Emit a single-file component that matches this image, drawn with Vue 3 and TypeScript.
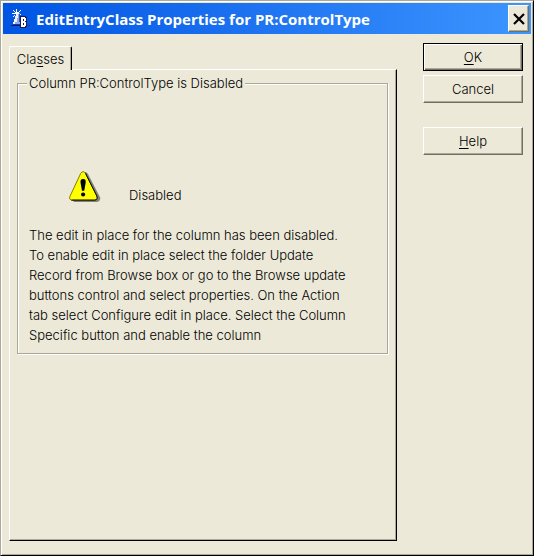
<script setup lang="ts">
interface KeyedLabel {
  before: string
  key: string
  after: string
}

const title = 'EditEntryClass Properties for PR:ControlType'
const tab: KeyedLabel = { before: 'Cla', key: 's', after: 'ses' }
const actions: (KeyedLabel & { kind: string })[] = [
  { kind: 'default', before: '', key: 'O', after: 'K' },
  { kind: 'plain', before: 'Cancel', key: '', after: '' },
  { kind: 'spaced', before: '', key: 'H', after: 'elp' },
]
const message: string[] = [
  'The edit in place for the column has been disabled.',
  'To enable edit in place select the folder Update',
  'Record from Browse box or go to the Browse update',
  'buttons control and select properties. On the Action',
  'tab select Configure edit in place. Select the Column',
  'Specific button and enable the column',
]
</script>

<template>
  <main class="dialog" role="dialog" aria-labelledby="dialog-title">
    <header class="titlebar">
      <svg class="app-icon" viewBox="0 0 20 20" aria-hidden="true" shape-rendering="crispEdges">
        <path d="M5 4h4v4h1v4h1v4H2v-3h1v-3h1V7h1z" fill="#8fa8ea" />
        <path d="M5 4h2v5H6v4H4v2H2v-2h1v-3h1V7h1z" fill="#eef4ff" />
        <path d="M8 5h1v3h1v4h1v4H9v-3H8z" fill="#3046b0" />
        <path d="M0 16h11v1H0z" fill="#0c1c70" />
        <path d="M2 15h8v1H2zM15 16h4v1h-4z" fill="#26369a" />
        <path d="M5 0h1v3H5zM2 1h1v1H2zM3 2h1v1H3zM1 4h3v1H1zM4 3h4v2H4zM8 2h1v1H8zM9 1h1v1H9zM9 5h1v1H9zM3 6h1v1H3zM2 7h1v1H2z" fill="#fff" />
        <path d="M9 7h6v1h1v10h-1v1H9z" fill="#14205e" />
        <path fill-rule="evenodd" d="M10 8h4v1h1v3h-1v1h1v4h-1v1h-4zM12 10v2h1v-2zM12 14v2h1v-2z" fill="#fff" />
      </svg>
      <h1 id="dialog-title" class="title">{{ title }}</h1>
      <button class="close" type="button" aria-label="Close">
        <svg viewBox="0 0 12 12" aria-hidden="true">
          <path d="M1 1L11 11M11 1L1 11" stroke="#000" stroke-width="2.2" />
        </svg>
      </button>
    </header>

    <div class="body">
      <section class="sheet">
        <div role="tablist" class="tabs">
          <button id="tab-classes" class="tab" type="button" role="tab" aria-selected="true" aria-controls="panel-classes">{{ tab.before }}<u>{{ tab.key }}</u>{{ tab.after }}</button>
        </div>
        <div id="panel-classes" class="panel" role="tabpanel" aria-labelledby="tab-classes">
          <fieldset class="group">
            <legend>Column PR:ControlType is Disabled</legend>
            <div class="status">
              <svg class="warning" viewBox="0 0 34 34" aria-hidden="true">
                <path d="M16 3q2-2 4 1l13 25q1 4-3 5H7q-3 0-3-3z" fill="#808080" />
                <path d="M12.500 3.500q2.500-3.500 5 0l12 24q1.500 4-2 4.500h-25q-3-1-1.500-4z" fill="#ff0" stroke="#777700" />
                <path d="M17.500 3.500l12 24q1.500 4-2 4.500h-25" fill="none" stroke="#000" />
                <path d="M15 9.500c2.500 0 3 1.500 2.700 4L16.200 22h-2.400l-1.500-8.500c-.3-2.500.2-4 2.700-4z" fill="#000" />
                <circle cx="15" cy="26" r="2.200" fill="#000" />
              </svg>
              <span>Disabled</span>
            </div>
            <p class="message">
              <span v-for="line in message" :key="line" class="line">{{ line }}</span>
            </p>
          </fieldset>
        </div>
      </section>

      <nav class="actions" aria-label="Dialog actions">
        <button v-for="(a, i) in actions" :key="i" type="button" class="action" :class="a.kind">{{ a.before }}<u v-if="a.key">{{ a.key }}</u>{{ a.after }}</button>
      </nav>
    </div>
  </main>
</template>

<style>
body {
  background: #ece9d8;
}
</style>

<style scoped>
.dialog {
  box-sizing: border-box;
  min-height: 100vh;
  display: flex;
  flex-direction: column;
  padding: 1px;
  border: 1px solid;
  border-color: #aca899 #000 #000 #aca899;
  background: #ece9d8;
  box-shadow: inset 1px 1px #fff, inset -1px -1px #aca899;
  color: #000;
  font: 300 13px/20px Inter, Arial, sans-serif;
}

button {
  margin: 0;
  padding: 0;
  border-radius: 0;
  background: #ece9d8;
  color: inherit;
  font: inherit;
}

u {
  text-underline-offset: 2px;
  text-decoration-thickness: 1px;
}

.titlebar {
  display: flex;
  align-items: center;
  height: 31px;
  margin: 1px;
  padding: 0 2px 0 8px;
  background: linear-gradient(90deg, #0054e3, #3d95ff);
}

.app-icon {
  width: 20px;
  height: 20px;
  flex: none;
}

.title {
  flex: 1;
  margin: 0 0 0 5px;
  color: #fff;
  font: bold 15px/20px "Open Sans", "Trebuchet MS", sans-serif;
  white-space: nowrap;
}

.close {
  display: grid;
  place-items: center;
  width: 21px;
  height: 27px;
  border: 1px solid;
  border-color: #fff #716f64 #716f64 #fff;
  box-shadow: inset -1px -1px #aca899;
}

.close svg {
  width: 12px;
  height: 12px;
}

.body {
  flex: 1;
  display: flex;
  gap: 26px;
  padding: 8px 9px 13px 7px;
}

.sheet {
  flex: 1;
  display: flex;
  flex-direction: column;
  padding-top: 3px;
}

.tabs {
  display: flex;
}

.tab {
  position: relative;
  width: 63px;
  height: 24px;
  margin-bottom: -1px;
  border: 1px solid;
  border-color: #fff #000 transparent #fff;
  border-bottom: 0;
  border-radius: 2px 2px 0 0;
  box-shadow: inset -1px 0 #aca899;
}

.panel {
  flex: 1;
  padding: 5px 8px 5px 7px;
  border: 1px solid;
  border-color: #fff #000 #000 #fff;
  box-shadow: inset -1px -1px #aca899;
}

.group {
  min-width: 0;
  margin: 0;
  padding: 0 11px 8px;
  border: 1px solid #aca899;
  box-shadow: 1px 1px #fff, inset 1px 1px #fff;
}

.group legend {
  margin-left: -2px;
  padding: 0 2px;
  line-height: 16px;
  background: #ece9d8;
}

.status {
  display: flex;
  align-items: flex-end;
  gap: 28px;
  margin: 79px 0 0 40px;
}

.warning {
  width: 32px;
  height: 32px;
  margin-bottom: 3px;
}

.message {
  margin: 20px 0 0;
}

.line {
  display: block;
  white-space: nowrap;
}

.actions {
  display: flex;
  flex-direction: column;
  flex: none;
  width: 100px;
}

.action {
  height: 28px;
  margin-bottom: 4px;
  border: 1px solid;
  border-color: #fff #716f64 #716f64 #fff;
  box-shadow: inset -1px -1px #aca899;
}

.action.default {
  border-color: #000;
  box-shadow: inset 1px 1px #fff, inset -1px -1px #716f64, inset -2px -2px #aca899;
}

.action.spaced {
  margin-top: 20px;
}
</style>
